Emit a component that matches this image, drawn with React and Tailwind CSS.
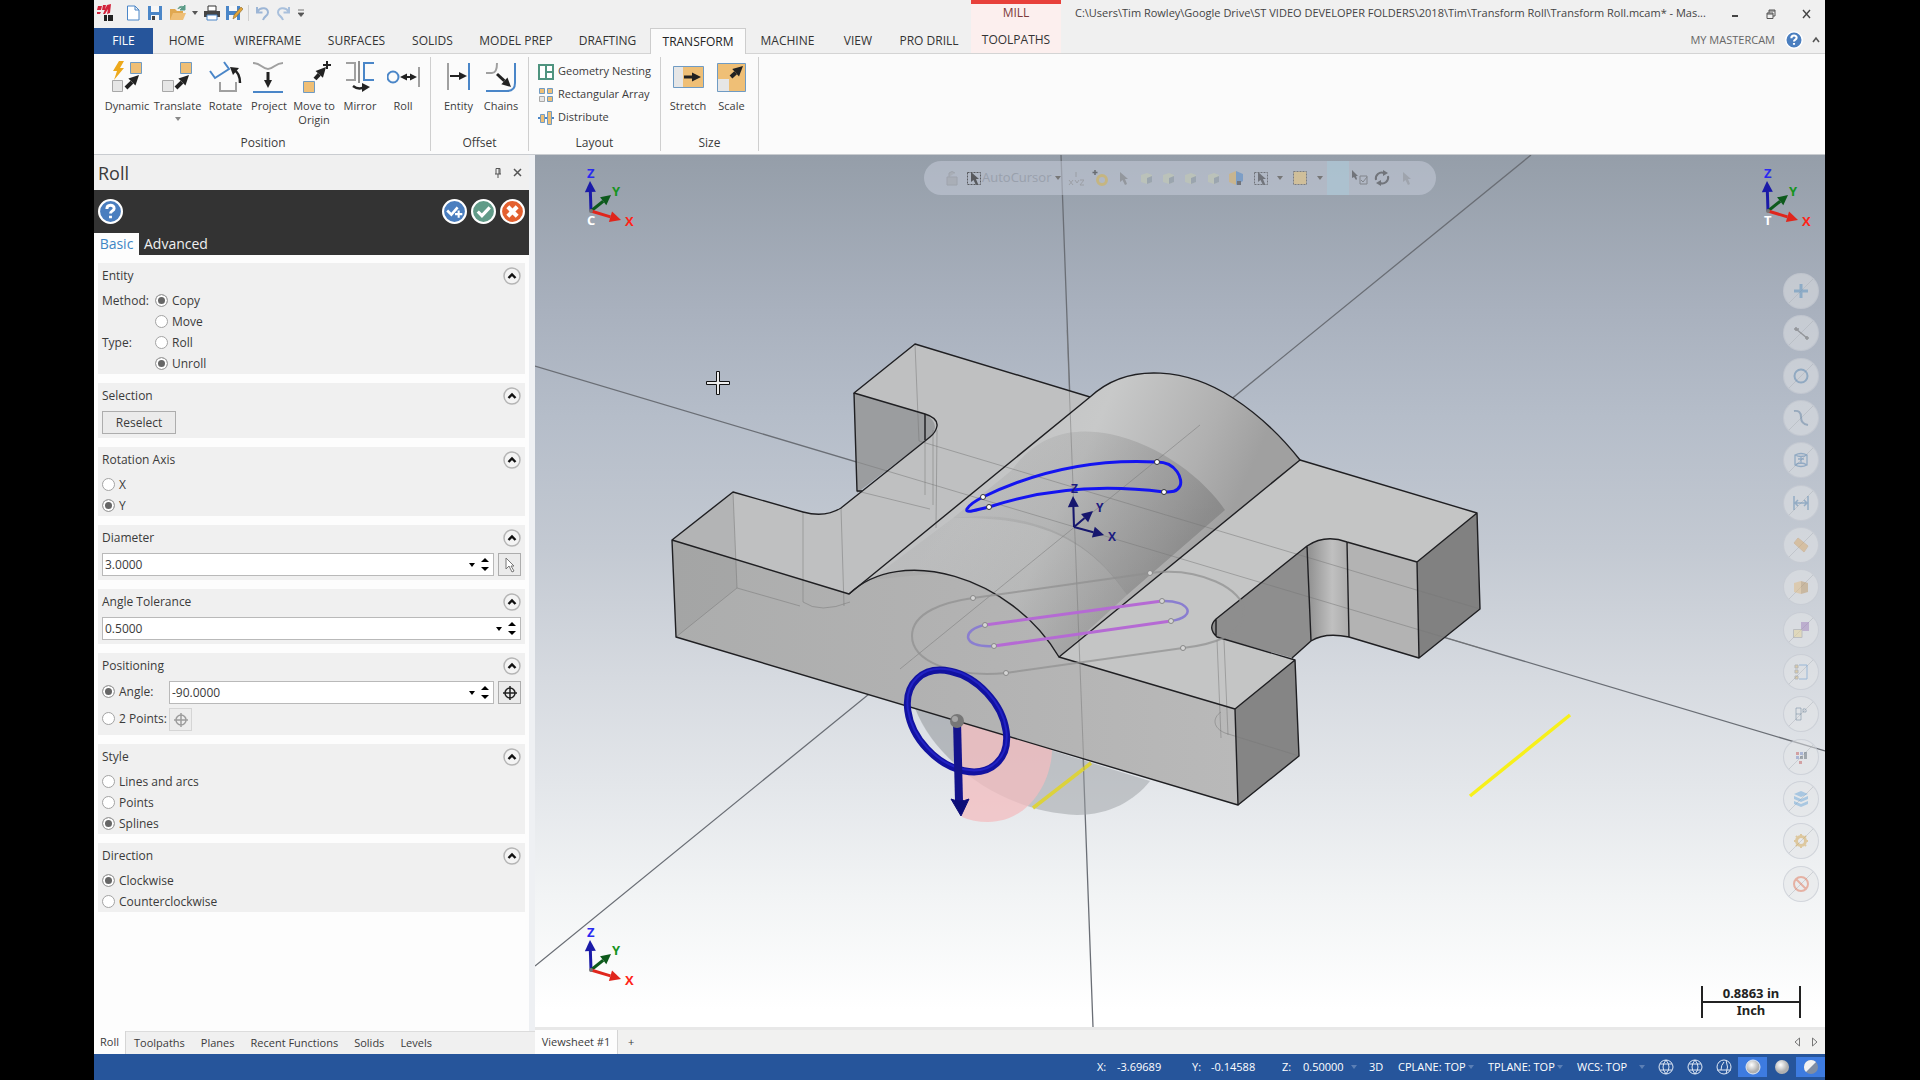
import { useId } from "react";
import { clsx } from "clsx";

const tabs = [
  { label: "HOME", width: "w-[67px]" },
  { label: "WIREFRAME", width: "w-[95px]" },
  { label: "SURFACES", width: "w-[83px]" },
  { label: "SOLIDS", width: "w-[69px]" },
  { label: "MODEL PREP", width: "w-[98px]" },
  { label: "DRAFTING", width: "w-[85px]" },
  { label: "TRANSFORM", width: "w-[96px]", active: true },
  { label: "MACHINE", width: "w-[83px]" },
  { label: "VIEW", width: "w-[58px]" },
  { label: "PRO DRILL", width: "w-[84px]" },
];

/* ---------- small shared drawings ---------- */

const Caret = ({ className = "fill-[#555]" }) => (
  <svg viewBox="0 0 6 4" className={clsx("h-1 w-[6px]", className)}>
    <path d="M0 0H6L3 4Z" />
  </svg>
);

const Arrow = ({ x1, y1, x2, y2, color = "#222", w = 3, head = 8 }) => {
  const a = Math.atan2(y2 - y1, x2 - x1);
  const bx = x2 - Math.cos(a) * head;
  const by = y2 - Math.sin(a) * head;
  const px = Math.sin(a) * head * 0.5;
  const py = Math.cos(a) * head * 0.5;
  return (
    <g fill={color} stroke="none">
      <path d={`M${x1} ${y1}L${bx} ${by}`} stroke={color} strokeWidth={w} />
      <path d={`M${x2} ${y2}L${bx + px} ${by - py}L${bx - px} ${by + py}Z`} />
    </g>
  );
};

const HelpIcon = ({ className }) => (
  <svg viewBox="0 0 24 24" className={className}>
    <circle cx="12" cy="12" r="11" fill="#4a7ebf" stroke="#fff" strokeWidth="2" />
    <path
      d="M8.500 9.500C8.500 5 15.500 5 15.500 9C15.500 11.500 12 11.300 12 14M12 16v2.400"
      fill="none"
      stroke="#fff"
      strokeWidth="2.800"
    />
  </svg>
);

/* ---------- quick access bar ---------- */

const QuickAccess = () => (
  <div className="mb-[2px] flex h-[26px] items-center pl-[2px]">
    <svg viewBox="0 0 18 18" className="mr-[11px] h-[18px] w-[18px]">
      <path d="M2 2H6L5 6H1M7 1H10L9 6H6M1 8H5L4 10H1M11 1L15 0L14 9L11 10L12 5L9 10H7Z" fill="#d3243c" />
      <path d="M8 11h3v6H8zM12 11h5v6h-5z" fill="#222" />
    </svg>
    <button aria-label="New" className="mr-[6px] h-4 w-4">
      <svg viewBox="0 0 16 16">
        <path d="M2.500 1H10L14 5V15H2.500ZM10 1V5H14" fill="#fff" stroke="#4a86c8" />
      </svg>
    </button>
    <button aria-label="Save" className="mr-[6px] h-4 w-4">
      <svg viewBox="0 0 16 16">
        <path d="M1 1H15V15H1Z" fill="#4a86c8" />
        <path d="M4 1H12V7H4ZM4 10H12V15H4Z" fill="#f7f7f7" />
        <path d="M5 11H8V15H5Z" fill="#444" />
      </svg>
    </button>
    <button aria-label="Open" className="mr-[5px] h-4 w-[18px]">
      <svg viewBox="0 0 18 16">
        <path d="M1 4H6L8 6H14V15H1Z" fill="#e0a850" />
        <path d="M4 8H17L14 15H1Z" fill="#efbf76" />
        <path d="M9 4C10 1 13 1 15 2M16 0V5H11Z" fill="#5b9b87" stroke="#5b9b87" />
      </svg>
    </button>
    <Caret />
    <button aria-label="Print" className="ml-[6px] mr-[6px] h-4 w-4">
      <svg viewBox="0 0 16 16">
        <path d="M4 1H12V6H4Z" fill="#fff" stroke="#333" />
        <path d="M0 6H16V12H0Z" fill="#454545" />
        <path d="M3 10H13V15H3Z" fill="#fff" stroke="#4a86c8" />
      </svg>
    </button>
    <button aria-label="Save As" className="mr-[5px] h-4 w-[17px]">
      <svg viewBox="0 0 17 16">
        <path d="M0 1H14V15H0Z" fill="#4a86c8" />
        <path d="M3 1H11V6H3ZM3 10H11V15H3Z" fill="#f7f7f7" />
        <path d="M7 14L8 10L15 2L17 4L10 12Z" fill="#e3a53a" stroke="#8a6a2a" strokeWidth=".6" />
      </svg>
    </button>
    <span className="mr-[5px] h-4 w-px bg-[#d0d0d0]" />
    <button aria-label="Undo" className="mr-[6px] h-4 w-4">
      <svg viewBox="0 0 16 16" fill="none" stroke="#9db6d6" strokeWidth="2">
        <path d="M3 7C7 1 14 3 14 7.500C14 11 10 11 9 15M3 2V7.500H8.500" />
      </svg>
    </button>
    <button aria-label="Redo" className="mr-[6px] h-4 w-4">
      <svg viewBox="0 0 16 16" fill="none" stroke="#a9c0dc" strokeWidth="2">
        <path d="M13 7C9 1 2 3 2 7.500C2 11 6 11 7 15M13 2V7.500H7.500" />
      </svg>
    </button>
    <button aria-label="Customize" className="h-2 w-[6px]">
      <svg viewBox="0 0 6 8">
        <path d="M0 1H6M0 4H6L3 7.500Z" fill="#555" stroke="#555" strokeWidth=".8" />
      </svg>
    </button>
  </div>
);

const Header = () => (
  <header className="flex h-[54px] bg-[#f0f0f0] text-xs text-[#333]">
    <div className="flex flex-col">
      <QuickAccess />
      <nav className="flex h-[26px]">
        <button className="w-[59px] bg-[#26559b] text-white">FILE</button>
        {tabs.map((t) => (
          <button
            key={t.label}
            className={clsx(
              "whitespace-nowrap",
              t.width,
              t.active
                ? "border-x border-t border-[#cdcdcd] bg-[#fbfbfb] text-[#222]"
                : "border-b border-[#d4d4d4]"
            )}
          >
            {t.label}
          </button>
        ))}
      </nav>
    </div>
    <div className="flex w-[90px] flex-col items-center border-b border-t-4 border-b-[#d4d4d4] border-t-[#e8403a] bg-[#fcefee]">
      <span className="flex h-[18px] items-center text-[#7d3b3b]">MILL</span>
      <button className="mt-[6px] h-[26px]">TOOLPATHS</button>
    </div>
    <div className="flex min-w-0 flex-1 flex-col border-b border-[#d4d4d4] text-[11px]">
      <div className="flex h-[27px] items-center pl-[14px] text-[#444]">
        <span className="min-w-0 flex-1 overflow-hidden whitespace-nowrap">
          {"C:\\Users\\Tim Rowley\\Google Drive\\ST VIDEO DEVELOPER FOLDERS\\2018\\Tim\\Transform Roll\\Transform Roll.mcam* - Mas..."}
        </span>
        <button aria-label="Minimize" className="flex w-9 justify-center">
          <svg viewBox="0 0 10 10" className="h-[10px] w-[10px]">
            <path d="M2 7H8" stroke="#444" strokeWidth="2" />
          </svg>
        </button>
        <button aria-label="Restore" className="flex w-9 justify-center">
          <svg viewBox="0 0 10 10" className="h-[10px] w-[10px]" fill="none" stroke="#555">
            <path d="M1 4H7V9.500H1ZM3 4V1H9V7H7M3 2H9M1 5H7" />
          </svg>
        </button>
        <button aria-label="Close" className="flex w-9 justify-center">
          <svg viewBox="0 0 10 10" className="h-[10px] w-[10px]">
            <path d="M1 1L8 9M8 1L1 9" stroke="#444" strokeWidth="1.400" />
          </svg>
        </button>
      </div>
      <div className="flex h-[26px] items-center justify-end pr-1 text-[#666]">
        <a href="#my" className="mr-[10px]">
          MY MASTERCAM
        </a>
        <button aria-label="Help" className="mr-2">
          <HelpIcon className="h-[18px] w-[18px]" />
        </button>
        <button aria-label="Collapse ribbon" className="w-[10px]">
          <svg viewBox="0 0 10 10" className="h-[10px] w-[10px]">
            <path d="M2 7L5 3L8 7" fill="none" stroke="#555" strokeWidth="1.600" />
          </svg>
        </button>
      </div>
    </div>
  </header>
);

/* ---------- ribbon ---------- */

const box = { fill: "#efbf76", stroke: "#6f9bc4" };
const ghost = { fill: "#e6e6e6", stroke: "#a8a8a8" };

const ribbonIcons = {
  dynamic: (
    <>
      <path d="M8 0H13L9 7H13L3 19L6 10H2Z" fill="#eda91c" />
      <path d="M19.500 1.500H30.500V12.500H19.500Z" {...box} />
      <path d="M1.500 19.500H11.500V30.500H1.500Z" {...ghost} />
      <Arrow x1={15} y1={27} x2={28} y2={14} w={4} head={10} />
    </>
  ),
  translate: (
    <>
      <path d="M19.500 1.500H30.500V12.500H19.500Z" {...box} />
      <path d="M1.500 19.500H12.500V30.500H1.500Z" {...ghost} />
      <Arrow x1={15} y1={27} x2={28} y2={14} w={4} head={10} />
    </>
  ),
  rotate: (
    <>
      <path d="M1 10L6 17L20 8L15 1" fill="none" stroke="#4a86c8" strokeWidth="2" />
      <path d="M11 21V30H27V21" fill="none" stroke="#a0a0a0" strokeWidth="2" />
      <path d="M31 22C31 15 29 11 25 9" fill="none" stroke="#222" strokeWidth="2.500" />
      <path d="M21 6L30 7L24 14Z" fill="#222" />
    </>
  ),
  project: (
    <>
      <path d="M0 2C8 2 9 8 15 8S22 2 30 2" fill="none" stroke="#a0a0a0" strokeWidth="2" />
      <Arrow x1={15} y1={11} x2={15} y2={27} head={8} />
      <path d="M0 31H30" stroke="#4a86c8" strokeWidth="2" />
    </>
  ),
  move: (
    <>
      <path d="M5.500 20.500H16.500V31.500H5.500Z" {...box} />
      <Arrow x1={17} y1={18} x2={28} y2={6} w={4} head={10} />
      <path d="M29 0V8M25 4H33" stroke="#222" strokeWidth="2" />
    </>
  ),
  mirror: (
    <>
      <path d="M2 2H11V19H2" fill="none" stroke="#a0a0a0" strokeWidth="2" />
      <path d="M30 2H20V19H30" fill="none" stroke="#4a86c8" strokeWidth="2" />
      <path d="M15 0V22" stroke="#222" />
      <path d="M9 25C13 28 17 28 20 26" fill="none" stroke="#222" strokeWidth="2.500" />
      <path d="M26 26L18 22V31Z" fill="#222" />
    </>
  ),
  roll: (
    <>
      <circle cx="6" cy="16" r="5.500" fill="none" stroke="#4a86c8" strokeWidth="2" />
      <Arrow x1={22} y1={16} x2={13} y2={16} w={2} head={7} />
      <Arrow x1={19} y1={16} x2={30} y2={16} w={2} head={7} />
      <path d="M32 6V26" stroke="#a0a0a0" strokeWidth="2" />
    </>
  ),
  entity: (
    <>
      <path d="M6 2V29" stroke="#a0a0a0" strokeWidth="2" />
      <Arrow x1={8} y1={15} x2={25} y2={15} w={2} head={8} />
      <path d="M27 2V29" stroke="#4a86c8" strokeWidth="2" />
    </>
  ),
  chains: (
    <>
      <path d="M1 12H7Q12 12 12 2" fill="none" stroke="#a0a0a0" strokeWidth="2" />
      <path d="M1 30H22Q30 30 30 22V2" fill="none" stroke="#4a86c8" strokeWidth="2" />
      <Arrow x1={12} y1={13} x2={26} y2={26} head={9} />
    </>
  ),
  stretch: (
    <>
      <path d="M1.500 5.500H31.500V26.500H1.500Z" {...box} />
      <path d="M2 6H11V26H2Z" fill="#e6e6e6" />
      <Arrow x1={12} y1={16} x2={29} y2={16} head={9} />
    </>
  ),
  scale: (
    <>
      <path d="M2.500 2.500H30.500V30.500H2.500Z" {...box} />
      <path d="M3 18H14V30H3Z" fill="#e6e6e6" />
      <Arrow x1={16} y1={16} x2={28} y2={5} w={4} head={10} />
    </>
  ),
};

const RibbonButton = ({ icon, label, width, caret }) => (
  <button className={clsx("flex flex-col items-center text-[11px] leading-[14px]", width)}>
    <svg viewBox="0 0 33 33" className="mb-[5px] h-[33px] w-[33px]">
      {ribbonIcons[icon]}
    </svg>
    <span className="whitespace-pre">{label}</span>
    {caret && <Caret className="mt-1 fill-[#888]" />}
  </button>
);

const RibbonGroup = ({ label, children, className }) => (
  <section
    className={clsx(
      "flex flex-col items-center justify-between border-r border-[#cfcfcf]",
      className
    )}
  >
    <div className="flex pt-1">{children}</div>
    <h2 className="leading-4">{label}</h2>
  </section>
);

const layoutItems = [
  {
    label: "Geometry Nesting",
    icon: <path d="M1 1H15V15H1ZM8 1V15M8 8H15" fill="#fff" stroke="#4f947f" strokeWidth="2" />,
  },
  {
    label: "Rectangular Array",
    icon: (
      <>
        <path d="M1.500 1.500H6.500V6.500H1.500ZM9.500 1.500H14.500V6.500H9.500ZM9.500 9.500H14.500V14.500H9.500Z" {...box} />
        <path d="M1.500 9.500H6.500V14.500H1.500Z" {...ghost} />
      </>
    ),
  },
  {
    label: "Distribute",
    icon: (
      <>
        <path d="M0 8H16" stroke="#4a86c8" strokeWidth="2" />
        <path d="M2.500 4.500H6.500V12.500H2.500ZM9.500 1.500H13.500V14.500H9.500Z" {...box} />
      </>
    ),
  },
];

const Ribbon = () => (
  <div className="flex h-[101px] border-b border-[#c9ccd0] bg-[#fbfbfb] pb-[3px] pt-[3px] text-xs text-[#3b3b3b]">
    <RibbonGroup label="Position" className="pl-2 pr-[6px]">
      <RibbonButton icon="dynamic" label="Dynamic" width="w-[50px]" />
      <RibbonButton icon="translate" label="Translate" width="w-[51px]" caret />
      <RibbonButton icon="rotate" label="Rotate" width="w-[45px]" />
      <RibbonButton icon="project" label="Project" width="w-[42px]" />
      <RibbonButton icon="move" label={"Move to\nOrigin"} width="w-[48px]" />
      <RibbonButton icon="mirror" label="Mirror" width="w-[44px]" />
      <RibbonButton icon="roll" label="Roll" width="w-[42px]" />
    </RibbonGroup>
    <RibbonGroup label="Offset" className="px-[6px]">
      <RibbonButton icon="entity" label="Entity" width="w-[43px]" />
      <RibbonButton icon="chains" label="Chains" width="w-[42px]" />
    </RibbonGroup>
    <RibbonGroup label="Layout" className="w-[132px]">
      <div className="flex flex-col gap-[2px]">
        {layoutItems.map((item) => (
          <button key={item.label} className="flex h-[21px] items-center gap-1 whitespace-nowrap text-[11px]">
            <svg viewBox="0 0 16 16" className="h-4 w-4 shrink-0">
              {item.icon}
            </svg>
            {item.label}
          </button>
        ))}
      </div>
    </RibbonGroup>
    <RibbonGroup label="Size" className="px-[5px]">
      <RibbonButton icon="stretch" label="Stretch" width="w-[44px]" />
      <RibbonButton icon="scale" label="Scale" width="w-[43px]" />
    </RibbonGroup>
  </div>
);

/* ---------- roll panel ---------- */

const Section = ({ title, children }) => (
  <section className="bg-[#f0f0f0] px-1 pb-1">
    <div className="flex h-7 items-start justify-between pt-1">
      <h3 className="leading-[18px]">{title}</h3>
      <button type="button" aria-label={`Collapse ${title}`}>
        <svg viewBox="0 0 18 18" className="h-[18px] w-[18px]">
          <circle cx="9" cy="9" r="8" fill="#f4f4f4" stroke="#b5b5b5" strokeWidth="1.500" />
          <path d="M5.500 11L9 7.500L12.500 11" fill="none" stroke="#111" strokeWidth="2.400" />
        </svg>
      </button>
    </div>
    {children}
  </section>
);

const Radio = ({ name, label, checked }) => (
  <label className="flex h-[21px] items-center gap-1">
    <input
      type="radio"
      name={name}
      defaultChecked={checked}
      className="h-[13px] w-[13px] shrink-0 appearance-none rounded-full border border-[#a3a3a3] bg-white checked:bg-[#666] checked:shadow-[inset_0_0_0_2px_#fff]"
    />
    {label}
  </label>
);

const NumberBox = ({ label, value }) => {
  const id = useId();
  return (
    <div className="flex h-[23px] min-w-0 flex-1 items-center border border-[#b9b9b9] bg-white pr-1">
      <label htmlFor={id} aria-label={label} />
      <input
        id={id}
        type="text"
        defaultValue={value}
        className="h-full min-w-0 flex-1 bg-transparent pl-[2px] leading-5 outline-none"
      />
      <button type="button" aria-label={`${label} history`} className="mr-[6px]">
        <Caret className="fill-black" />
      </button>
      <div className="flex flex-col gap-[5px]">
        <button type="button" aria-label={`Increase ${label}`}>
          <svg viewBox="0 0 8 4" className="block h-1 w-2">
            <path d="M0 4H8L4 0Z" />
          </svg>
        </button>
        <button type="button" aria-label={`Decrease ${label}`}>
          <svg viewBox="0 0 8 4" className="block h-1 w-2">
            <path d="M0 0H8L4 4Z" />
          </svg>
        </button>
      </div>
    </div>
  );
};

const SquareButton = ({ label, disabled, children }) => (
  <button
    type="button"
    aria-label={label}
    disabled={disabled}
    className="flex h-[23px] w-[23px] shrink-0 items-center justify-center border border-[#adadad] bg-[#ebebeb] disabled:opacity-40"
  >
    <svg viewBox="0 0 16 16" className="h-4 w-4">
      {children}
    </svg>
  </button>
);

const Target = () => (
  <path d="M8 1V15M1 8H15M8 3A5 5 0 1 0 8 13A5 5 0 1 0 8 3" fill="none" stroke="#222" strokeWidth="1.500" />
);

const panelTabs = ["Toolpaths", "Planes", "Recent Functions", "Solids", "Levels"];

const RollPanel = () => (
  <aside className="flex w-[441px] shrink-0 flex-col bg-[#f0f0f0] text-xs text-[#3b3b3b]">
    <div className="flex flex-1 flex-col border-r-[6px] border-[#eef0f3]">
      <div className="flex h-[35px] items-center bg-[#f0f0f0] pl-1 pr-[6px]">
        <h1 className="flex-1 text-lg">Roll</h1>
        <button aria-label="Pin" className="mr-[10px]">
          <svg viewBox="0 0 10 10" className="h-[10px] w-[10px]" fill="none" stroke="#555">
            <path d="M2 6H8M3 6V.5H7V6M6 1V6M5 6V10" />
          </svg>
        </button>
        <button aria-label="Close panel">
          <svg viewBox="0 0 10 10" className="h-[10px] w-[10px]">
            <path d="M1 1L8 8M8 1L1 8" stroke="#555" strokeWidth="1.500" />
          </svg>
        </button>
      </div>
      <div className="bg-[#333] text-sm">
        <div className="flex h-[43px] items-center gap-1 px-1">
          <button aria-label="Panel help">
            <HelpIcon className="h-[25px] w-[25px]" />
          </button>
          <span className="flex-1" />
          <button aria-label="OK and create new operation">
            <svg viewBox="0 0 24 24" className="h-[25px] w-[25px]">
              <circle cx="12" cy="12" r="11" fill="#4a7ebf" stroke="#fff" strokeWidth="2" />
              <path d="M5 11L9 15L15 8" fill="none" stroke="#fff" strokeWidth="2.500" />
              <path d="M16 11V18M12.500 14.500H19.500" fill="none" stroke="#fff" strokeWidth="2" />
            </svg>
          </button>
          <button aria-label="OK">
            <svg viewBox="0 0 24 24" className="h-[25px] w-[25px]">
              <circle cx="12" cy="12" r="11" fill="#619b88" stroke="#fff" strokeWidth="2" />
              <path d="M6.500 12L10.500 16L18 8" fill="none" stroke="#fff" strokeWidth="3" />
            </svg>
          </button>
          <button aria-label="Cancel">
            <svg viewBox="0 0 24 24" className="h-[25px] w-[25px]">
              <circle cx="12" cy="12" r="11" fill="#e3602f" stroke="#fff" strokeWidth="2" />
              <path d="M7.500 7.500L16.500 16.500M16.500 7.500L7.500 16.500" stroke="#fff" strokeWidth="4" />
            </svg>
          </button>
        </div>
        <div className="flex h-[22px]">
          <button className="w-[45px] bg-[#fdfdfd] text-[#3f86c4]">Basic</button>
          <button className="px-[5px] text-[#f0f0f0]">Advanced</button>
        </div>
      </div>
      <form className="flex flex-1 flex-col gap-[9px] bg-[#fdfdfd] px-1 pt-2">
        <Section title="Entity">
          <div className="-mt-px -mb-1 grid grid-cols-[53px_1fr]">
            <span className="leading-[21px]">Method:</span>
            <div>
              <Radio name="method" label="Copy" checked />
              <Radio name="method" label="Move" />
            </div>
            <span className="leading-[21px]">Type:</span>
            <div>
              <Radio name="type" label="Roll" />
              <Radio name="type" label="Unroll" checked />
            </div>
          </div>
        </Section>
        <Section title="Selection">
          <button type="button" className="block h-[23px] w-[74px] border border-[#adadad] bg-[#ebebeb]">
            Reselect
          </button>
        </Section>
        <Section title="Rotation Axis">
          <div className="-mt-px -mb-1">
            <Radio name="axis" label="X" />
            <Radio name="axis" label="Y" checked />
          </div>
        </Section>
        <Section title="Diameter">
          <div className="flex gap-1">
            <NumberBox label="Diameter" value="3.0000" />
            <SquareButton label="Pick diameter">
              <path d="M4 1V12L7 9L10 15L12 14L9 9H12Z" fill="#fff" stroke="#777" />
            </SquareButton>
          </div>
        </Section>
        <Section title="Angle Tolerance">
          <div className="flex">
            <NumberBox label="Angle Tolerance" value="0.5000" />
          </div>
        </Section>
        <Section title="Positioning">
          <div className="mb-1 flex gap-1">
            <div className="w-[63px]">
              <Radio name="positioning" label="Angle:" checked />
            </div>
            <NumberBox label="Angle" value="-90.0000" />
            <SquareButton label="Pick angle">
              <Target />
            </SquareButton>
          </div>
          <div className="flex gap-1">
            <div className="w-[63px] whitespace-nowrap">
              <Radio name="positioning" label="2 Points:" />
            </div>
            <SquareButton label="Pick points" disabled>
              <Target />
            </SquareButton>
          </div>
        </Section>
        <Section title="Style">
          <div className="-mt-px -mb-1">
            <Radio name="style" label="Lines and arcs" />
            <Radio name="style" label="Points" />
            <Radio name="style" label="Splines" checked />
          </div>
        </Section>
        <Section title="Direction">
          <div className="-mt-px -mb-1">
            <Radio name="direction" label="Clockwise" checked />
            <Radio name="direction" label="Counterclockwise" />
          </div>
        </Section>
      </form>
    </div>
    <div className="flex h-[23px] text-[11px]">
      <button className="w-8 border-r border-[#d5d5d5] bg-[#fdfdfd]">Roll</button>
      <div className="flex flex-1 border-t border-[#dcdcdc]">
        {panelTabs.map((t) => (
          <button key={t} className="px-2">
            {t}
          </button>
        ))}
      </div>
    </div>
  </aside>
);

/* ---------- graphics window ---------- */

const Triad = ({ letter, className }) => (
  <svg viewBox="0 0 60 64" className={clsx("absolute h-16 w-[60px] text-[13px] font-bold", className)}>
    <Arrow x1={12} y1={46} x2={11} y2={16} color="#1a1aa8" head={11} />
    <Arrow x1={12} y1={46} x2={32} y2={30} color="#0d5a1c" head={10} />
    <Arrow x1={12} y1={46} x2={42} y2={55} color="#e0261c" head={11} />
    <circle cx="12" cy="46" r="2" fill="#777" />
    <text x="8" y="13" fill="#2a2af0">Z</text>
    <text x="33" y="31" fill="#16941f">Y</text>
    <text x="46" y="61" fill="#ff2418">X</text>
    {letter && <text x="8" y="60" fill="#fff">{letter}</text>}
  </svg>
);

const Dot = ({ x, y, faded }) => (
  <circle cx={x} cy={y} r="2.500" fill={faded ? "#d5d5d5" : "#fff"} stroke={faded ? "#888" : "#333"} />
);

const Model = () => (
  <svg
    viewBox="535 155 1290 872"
    preserveAspectRatio="xMidYMid slice"
    className="absolute inset-0 h-full w-full"
    fill="none"
    strokeLinejoin="round"
  >
    <defs>
      <linearGradient id="cyl" gradientUnits="userSpaceOnUse" x1="960" y1="470" x2="1200" y2="580">
        <stop offset="0" stopColor="#c1c2c3" />
        <stop offset=".4" stopColor="#c8c9c9" />
        <stop offset=".8" stopColor="#b0b0b0" />
        <stop offset="1" stopColor="#a0a0a0" />
      </linearGradient>
      <linearGradient id="shade" gradientUnits="userSpaceOnUse" x1="1020" y1="450" x2="1160" y2="570">
        <stop offset="0" stopColor="#777" stopOpacity=".12" />
        <stop offset="1" stopColor="#666" stopOpacity=".4" />
      </linearGradient>
      <linearGradient id="fillet" x1="0" x2="1">
        <stop offset="0" stopColor="#8f8f8f" />
        <stop offset=".6" stopColor="#c0c0c0" />
        <stop offset="1" stopColor="#ababab" />
      </linearGradient>
      <linearGradient id="front" x1="0" x2="1">
        <stop offset="0" stopColor="#acadad" />
        <stop offset=".5" stopColor="#b2b2b2" />
        <stop offset="1" stopColor="#b9b9b9" />
      </linearGradient>
    </defs>

    {/* world axes */}
    <path d="M535 366L1825 751M1531 155L535 966M1061 155L1093 1027" stroke="#6a6e75" strokeWidth="1.300" />

    {/* roll cylinder end below the part */}
    <path d="M915 708C935 760 1000 812 1077 815C1110 815 1135 800 1150 781Z" fill="#9a9ea2" fillOpacity=".5" />
    <path d="M957 721L1052 749C1052 780 1030 822 988 822Q973 822 962 817Z" fill="#f3bcbf" fillOpacity=".75" />
    <path d="M915 708L957 721L961 769C940 750 925 735 915 708Z" fill="#9a9ea2" fillOpacity=".25" />
    <path d="M1033 808L1091 763" stroke="#dcd23c" strokeWidth="3.500" />
    <path d="M1470 796L1570 715" stroke="#f7f01a" strokeWidth="3.500" />

    {/* faces */}
    <path d="M854 393L925 414Q938 418 937 426Q936 432 930 437L857 493Z" fill="#9b9d9f" />
    <path d="M672 540L733 492L803 512Q825 518 841 508L930 437Q942 424 925 414L854 393L915 344L1090 397L849 594Z" fill="#bfc0c1" />
    <path d="M849 594L1090 397C1130 360 1190 370 1233 398Q1270 422 1300 460L1059 657C1010 590 900 540 849 594Z" fill="url(#cyl)" />
    <path d="M1300 460L1477 513L1417 562L1347 542Q1325 534 1307 546L1216 619Q1207 628 1217 637L1295 660L1235 709L1059 657Z" fill="#c4c5c5" />
    <path d="M672 540L849 594C900 545 1010 575 1059 657L1235 709L1238 805L676 637Z" fill="url(#front)" />
    <path d="M1216 619L1307 546L1311 641L1292 658L1217 637Q1211 632 1212 625Z" fill="#8e8e8e" />
    <path d="M1307 546Q1325 534 1347 542L1349 637Q1325 632 1311 641Z" fill="url(#fillet)" />
    <path d="M1347 542L1417 562L1419 658L1349 637Z" fill="#b3b3b3" />
    <path d="M1417 562L1477 513L1480 609L1419 658Z" fill="#818181" />
    <path d="M1235 709L1295 660L1299 756L1238 805Z" fill="#858585" />
    <path d="M672 540L733 492L737 588L676 637Z" fill="#888" fillOpacity=".2" />

    {/* translucent roll cylinder */}
    <path d="M1012 470C1040 430 1080 428 1110 434C1160 444 1205 480 1225 510L1127 595C1090 540 1040 516 953 518Z" fill="url(#shade)" />
    <path d="M953 518C1040 508 1095 545 1127 595L1059 657C1030 610 985 585 940 573L870 580Z" fill="url(#shade)" fillOpacity=".7" />

    {/* hidden edges */}
    <g stroke="#777" strokeOpacity=".5">
      <path d="M915 344L919 441L1480 609M733 492L737 588L676 637M737 588L800 606M803 512V602Q820 614 850 602M841 508L844 606M925 414V495M933 430V505M937 430L936 528M857 491L930 509" />
      <path d="M1217 640L1221 738M1224 640L1228 735M1221 712C1212 718 1213 728 1225 733L1299 756" />
      <path d="M857 462L1480 648M1200 425L900 669M1067 330L1084 770" />
    </g>

    {/* visible edges */}
    <g stroke="#1f1f22" strokeWidth="1.400">
      <path d="M1090 397L915 344L854 393L925 414Q938 418 937 426Q936 432 930 437L841 508Q825 518 803 512L733 492L672 540L849 594L1090 397C1130 360 1190 370 1233 398Q1270 422 1300 460L1059 657L1235 709L1238 805L676 637L672 540" />
      <path d="M849 594C900 545 1010 575 1059 657M854 393L857 491L862 491M925 414V440" />
      <path d="M1300 460L1477 513L1417 562L1347 542Q1325 534 1307 546L1216 619Q1207 628 1217 637L1295 660L1235 709M1295 660L1299 756L1238 805M1477 513L1480 609L1419 658L1349 637Q1325 632 1311 641L1292 658M1417 562L1419 658M1307 546L1311 641M1347 542L1349 637M1216 619V636" />
    </g>

    {/* flat slot geometry */}
    <path
      d="M973 598L1150 573C1200 566 1244 590 1244 611C1244 636 1210 645 1183 648L1006 673C950 678 912 660 912 636C912 612 945 602 973 598Z"
      stroke="#8f8f8f"
      strokeOpacity=".7"
      strokeWidth="2"
    />
    <path d="M985 625C962 629 960 648 994 646M1162 601C1190 600 1198 617 1171 621" stroke="#8a7ed0" strokeWidth="2.500" />
    <path d="M985 625L1162 601M994 646L1171 621" stroke="#b56ad4" strokeWidth="3" />
    <Dot x={973} y={598} faded />
    <Dot x={1150} y={573} faded />
    <Dot x={1183} y={648} faded />
    <Dot x={1006} y={673} faded />
    <Dot x={985} y={625} faded />
    <Dot x={1162} y={601} faded />
    <Dot x={1171} y={621} faded />
    <Dot x={994} y={646} faded />

    {/* wrapped slot */}
    <path
      d="M983 497Q1065 457 1157 462C1177 462 1183 480 1180 486C1177 492 1172 492 1164 492Q1070 480 989 507C975 510 965 514 967 509C969 505 975 501 983 497Z"
      stroke="#1414f0"
      strokeWidth="3"
    />
    <Dot x={983} y={497} />
    <Dot x={1157} y={462} />
    <Dot x={1164} y={492} />
    <Dot x={989} y={507} />

    {/* origin triad */}
    <Arrow x1={1074} y1={527} x2={1073} y2={496} color="#16166e" w={2} head={11} />
    <Arrow x1={1074} y1={527} x2={1093} y2={511} color="#16166e" w={2} head={11} />
    <Arrow x1={1074} y1={527} x2={1104} y2={535} color="#16166e" w={2} head={11} />
    <g fill="#1c1c80" className="text-[12px] font-bold">
      <text x="1071" y="493">Z</text>
      <text x="1096" y="512">Y</text>
      <text x="1108" y="541">X</text>
    </g>

    {/* angle gizmo */}
    <ellipse cx="957" cy="721" rx="58" ry="41" transform="rotate(47 957 721)" stroke="#1212a0" strokeWidth="7" />
    <ellipse cx="956" cy="720" rx="58" ry="41" transform="rotate(47 957 721)" stroke="#2222c4" strokeWidth="2" />
    <path d="M957 721L959 801" stroke="#14148c" strokeWidth="8" />
    <path d="M951 799Q960 803 969 799L961 816Z" fill="#0e0e78" stroke="#0e0e78" />
    <circle cx="957" cy="721" r="7" fill="#777" />
    <circle cx="955" cy="719" r="3" fill="#a5a5a5" />

    {/* crosshair cursor */}
    <path d="M716.500 371.500H719.500V381.500H729.500V384.500H719.500V394.500H716.500V384.500H706.500V381.500H716.500Z" fill="#eee" stroke="#111" />
  </svg>
);

const cursorBox = (
  <>
    <path d="M1.500 2.500H14.500V14.500H1.500Z" fill="none" stroke="#333" strokeDasharray="2 1" />
    <path d="M5 2V12L7.500 10L10 15L12 14L10 9H13Z" fill="#333" />
  </>
);
const pointer = <path d="M5 2V12L7.500 10L10 15L12 14L10 9H13Z" fill="#777" />;
const cube = (
  <>
    <path d="M3 5L9 3L14 5V12L9 14L3 12Z" fill="#c6cdb0" />
    <path d="M9 8L14 6V12L9 14Z" fill="#87949a" />
  </>
);

const selectionTools = [
  { name: "xyz", width: "w-6", icon: <path d="M1 10L5 15M5 10L1 15M7 10L9 13L11 10M12 10H16L12 15H16M8 2V7" fill="none" stroke="#888" /> },
  {
    name: "Point position",
    width: "w-6",
    icon: (
      <>
        <circle cx="10" cy="10" r="4.500" fill="none" stroke="#d9b440" strokeWidth="3" />
        <path d="M3 0V5M.5 2.500H5.500" stroke="#222" strokeWidth="1.500" />
      </>
    ),
  },
  { name: "Select", width: "w-[22px]", icon: pointer },
  { name: "Select face", width: "w-[23px]", icon: cube },
  { name: "Select body", width: "w-[22px]", icon: cube },
  { name: "Select edge", width: "w-[22px]", icon: cube },
  { name: "Select loop", width: "w-[23px]", icon: cube },
  {
    name: "Select color",
    width: "w-6",
    icon: (
      <>
        <path d="M8 1L15 4V11L8 15Z" fill="#4a86c8" />
        <path d="M8 1L1 4V12L8 15Z" fill="#e0b45c" />
        <path d="M9 11H13V15H9Z" fill="#333" />
      </>
    ),
  },
  { name: "Selection method", width: "w-[25px]", icon: cursorBox, caret: true },
  {
    name: "Window mode",
    width: "w-[26px]",
    icon: <path d="M1.500 1.500H14.500V14.500H1.500Z" fill="#efc670" stroke="#444" strokeDasharray="2 1" />,
    caret: true,
  },
];

const SelectionBar = () => (
  <div className="absolute left-1/2 top-[6px] flex h-[34px] w-[512px] -translate-x-1/2 items-center rounded-full bg-[#c9d0de]/50 pl-[20px] text-[#8a919c]">
    <button aria-label="Lock" className="mr-[6px] opacity-30">
      <svg viewBox="0 0 16 16" className="h-4 w-4">
        <path d="M3 7H13V15H3ZM5 7V3Q8 0 11 3" fill="#999" stroke="#777" />
      </svg>
    </button>
    <button className="flex items-center">
      <svg viewBox="0 0 16 16" className="h-4 w-4 opacity-70">
        {cursorBox}
      </svg>
      <span className="mr-1 text-[13px] opacity-60">AutoCursor</span>
      <Caret className="fill-[#777]" />
    </button>
    <div className="ml-[3px] flex items-center">
      {selectionTools.map((t) => (
        <div key={t.name} className="flex items-center">
          <button aria-label={t.name} className={clsx("flex justify-center opacity-50", t.width)}>
            <svg viewBox="0 0 16 16" className="h-4 w-4">
              {t.icon}
            </svg>
          </button>
          {t.caret && <Caret className="mx-1 fill-[#777]" />}
        </div>
      ))}
    </div>
    <span className="h-[34px] w-[22px] bg-[#a9c6d6]/60" />
    <button aria-label="Verify selection" className="ml-[2px] opacity-50">
      <svg viewBox="0 0 18 16" className="h-4 w-[18px]">
        <path d="M1 0V8L3 7L5 10L6 9L5 6H7Z" fill="#333" />
        <path d="M9 6H16V14H9ZM10 10L12 12L16 7" fill="none" stroke="#555" />
      </svg>
    </button>
    <button aria-label="Invert selection" className="ml-[5px] opacity-50">
      <svg viewBox="0 0 16 16" className="h-4 w-4">
        <path d="M2 10A6 6 0 0 1 10 3M14 6A6 6 0 0 1 6 13" fill="none" stroke="#333" strokeWidth="2" />
        <path d="M9 0L14 3L9 6ZM7 10L2 13L7 16Z" fill="#333" />
      </svg>
    </button>
    <button aria-label="Select last" className="ml-2 opacity-30">
      <svg viewBox="0 0 16 16" className="h-4 w-4">
        {pointer}
      </svg>
    </button>
  </div>
);

const quickMasks = [
  { name: "Points", icon: <path d="M8 1V15M1 8H15" stroke="#4a86b8" strokeWidth="3" /> },
  { name: "Lines", icon: <path d="M3 4L14 13M1 4H6M3 2V6M12 13H16M14 11V15" stroke="#555" strokeWidth="1.500" /> },
  { name: "Arcs", icon: <circle cx="8" cy="8" r="6.500" stroke="#4a7aa8" strokeWidth="2" /> },
  { name: "Splines", icon: <path d="M1 1Q8 0 8 7T15 15" stroke="#56779c" strokeWidth="2" /> },
  { name: "Wireframe", icon: <path d="M2 3Q8 0 14 3V13Q8 16 2 13ZM2 3Q8 6 14 3M2 13Q8 9 14 13M5 7H11M8 4V12" stroke="#4878a8" strokeWidth="1.300" /> },
  { name: "Drafting", icon: <path d="M1 1V15M15 1V15M2 8H14M5 5L2 8L5 11M11 5L14 8L11 11" stroke="#4a7aa8" strokeWidth="1.500" /> },
  { name: "Surfaces", icon: <path d="M1 6L5 1L15 9L11 15Z" fill="#d9a35c" stroke="#c99a60" /> },
  {
    name: "Solids",
    icon: (
      <>
        <path d="M1 4L8 2V15L1 13Z" fill="#e3b878" />
        <path d="M8 2L15 4V13L8 15Z" fill="#b98f57" />
      </>
    ),
  },
  {
    name: "Colors",
    icon: (
      <>
        <path d="M8 0H16V9H8Z" fill="#9b78b8" />
        <path d="M.5 7.500H9V15.500H.5Z" fill="#e8d490" stroke="#999" />
      </>
    ),
  },
  {
    name: "Groups",
    icon: (
      <>
        <path d="M6 1H14V15H6" stroke="#4a86c8" />
        <path d="M2 1H5V4H2ZM2 6H5V9H2ZM2 12H5V15H2Z" fill="#e0b45c" stroke="#888" />
      </>
    ),
  },
  { name: "Results", icon: <path d="M3 2V14M3 2H8M3 8H8M3 14H8M8 2V14M10 3Q14 2 13 6H10Z" stroke="#5f7890" /> },
  {
    name: "Named groups",
    icon: (
      <>
        <path d="M3 3H6V6H3ZM6 12H9V15H6Z" fill="#c05050" />
        <path d="M7 3H10V6H7ZM3 7H6V10H3Z" fill="#6a7fc0" />
        <path d="M11 3H14V10H11ZM7 7H10V10H7Z" fill="#55606a" />
      </>
    ),
  },
  { name: "Levels", icon: <path d="M1 3L8 0L15 3L8 6ZM1 5L8 8L15 5V8L8 11L1 8ZM1 10L8 13L15 10V13L8 16L1 13Z" fill="#5f9fd6" /> },
  {
    name: "Machine",
    icon: (
      <>
        <circle cx="8" cy="8" r="4.500" stroke="#d1a040" strokeWidth="3" />
        <path d="M8 1V3M8 13V15M1 8H3M13 8H15M3 3L4 4M12 12L13 13M3 13L4 12M12 4L13 3" stroke="#d1a040" strokeWidth="2" />
      </>
    ),
  },
  { name: "Clear", icon: <path d="M8 1A7 7 0 1 0 8 15A7 7 0 1 0 8 1M3 3L13 13" stroke="#e06a4a" strokeWidth="2" /> },
];

const QuickMasks = () => (
  <div className="absolute right-[6px] top-[118px] flex h-[629px] flex-col justify-between">
    {quickMasks.map((m) => (
      <button
        key={m.name}
        aria-label={m.name}
        className="h-9 w-9 rounded-full border border-[#b9c0ca]/50 bg-[#e4e6e8]/50"
      >
        <svg viewBox="-9 -9 34 34" fill="none">
          <path d="M-4 20L20 -4" stroke="#a5aab2" strokeOpacity=".4" />
          <g opacity=".45">{m.icon}</g>
        </svg>
      </button>
    ))}
  </div>
);

const GraphicsWindow = () => (
  <main className="flex min-w-0 flex-1 flex-col">
    <div className="relative flex-1 overflow-hidden bg-[linear-gradient(#959ea9_0%,#a9b1be_18%,#b5bdc9_30%,#c3c9d2_45%,#d6dae0_60%,#e3e6ea_72%,#f2f4f5_85%,#ffffff_98%)]">
      <Model />
      <Triad letter="C" className="left-11 top-[10px]" />
      <Triad letter="T" className="right-[9px] top-[10px]" />
      <Triad className="bottom-[39px] left-11" />
      <SelectionBar />
      <QuickMasks />
      <div className="absolute bottom-[9px] right-6 w-[100px] border-x-2 border-[#222] text-center font-['Noto_Sans'] text-[13px] font-bold text-[#222]">
        <p className="border-b-2 border-[#222] leading-[15px]">0.8863 in</p>
        <p className="leading-[15px]">Inch</p>
      </div>
    </div>
    <div className="flex h-[27px] items-center border-t-[3px] border-[#e8e8e8] bg-[#f1f1f0] pr-[5px] text-[11px] text-[#3b3b3b]">
      <button className="h-full w-[83px] border-r border-[#d5d5d5] bg-[#fdfdfd]">Viewsheet #1</button>
      <button className="px-[10px]">+</button>
      <span className="flex-1" />
      <button aria-label="Previous viewsheet" className="mr-3">
        <svg viewBox="0 0 6 10" className="h-[10px] w-[6px]">
          <path d="M5.500 1V9L1 5Z" fill="none" stroke="#777" />
        </svg>
      </button>
      <button aria-label="Next viewsheet" className="mr-[2px]">
        <svg viewBox="0 0 6 10" className="h-[10px] w-[6px]">
          <path d="M.5 1V9L5 5Z" fill="none" stroke="#777" />
        </svg>
      </button>
    </div>
  </main>
);

/* ---------- status bar ---------- */

const shadingModes = [
  { name: "Wireframe", icon: <path d="M8 1A7 7 0 1 0 8 15A7 7 0 1 0 8 1M8 1Q2 8 8 15M8 1Q14 8 8 15M2 5H14M2 11H14" /> },
  { name: "Dimmed wireframe", icon: <path d="M8 1A7 7 0 1 0 8 15A7 7 0 1 0 8 1M8 1Q2 8 8 15M8 1Q14 8 8 15M2 5H14M2 11H14" /> },
  { name: "Hidden wireframe", icon: <path d="M8 1A7 7 0 1 0 8 15A7 7 0 1 0 8 1M10 1Q13 8 10 15M1 11H15M8 3Q5 6 5 11" /> },
  { name: "Outline shaded", icon: <circle cx="8" cy="8" r="7" fill="url(#ball)" />, on: true },
  { name: "Shaded", icon: <circle cx="8" cy="8" r="7" fill="url(#ball)" stroke="none" /> },
  {
    name: "Translucency",
    icon: (
      <>
        <circle cx="8" cy="8" r="7" fill="#7f8da3" stroke="none" />
        <path d="M3 13A7 7 0 0 1 13 3Z" fill="#f2f2f2" stroke="none" />
      </>
    ),
    on: true,
  },
];

const StatusBar = () => (
  <footer className="flex h-[26px] items-center justify-end whitespace-nowrap bg-[#26559b] text-[11px] text-white">
    <svg className="h-0 w-0">
      <radialGradient id="ball" cx=".4" cy=".35">
        <stop offset="0" stopColor="#fff" />
        <stop offset="1" stopColor="#b0b0b0" />
      </radialGradient>
    </svg>
    <span className="w-5">X:</span>
    <span className="w-[75px]">-3.69689</span>
    <span className="w-[19px]">Y:</span>
    <span className="w-[71px]">-0.14588</span>
    <span className="w-[21px]">Z:</span>
    <span className="w-12">0.50000</span>
    <Caret className="mr-3 fill-[#5b7fb5]" />
    <button className="w-[29px] text-left">3D</button>
    <button className="flex w-[90px] items-center justify-between pr-[14px]">
      CPLANE: TOP
      <Caret className="fill-[#5b7fb5]" />
    </button>
    <button className="flex w-[89px] items-center justify-between pr-[14px]">
      TPLANE: TOP
      <Caret className="fill-[#5b7fb5]" />
    </button>
    <button className="flex w-[74px] items-center justify-between pr-[6px]">
      WCS: TOP
      <Caret className="fill-[#5b7fb5]" />
    </button>
    <div className="flex">
      {shadingModes.map((m) => (
        <button
          key={m.name}
          aria-label={m.name}
          className={clsx("flex h-5 w-[29px] items-center justify-center", m.on && "bg-[#3d7be0]")}
        >
          <svg viewBox="0 0 16 16" className="h-4 w-4" fill="none" stroke="#dfe8f5">
            {m.icon}
          </svg>
        </button>
      ))}
    </div>
  </footer>
);

const App = () => {
  return (
    <div className="min-h-screen bg-black pl-[94px] pr-[95px] font-['Open_Sans',sans-serif]">
      <div className="flex min-h-screen flex-col bg-[#f0f0f0]">
        <Header />
        <Ribbon />
        <div className="flex flex-1">
          <RollPanel />
          <GraphicsWindow />
        </div>
        <StatusBar />
      </div>
    </div>
  );
};

export default App;
